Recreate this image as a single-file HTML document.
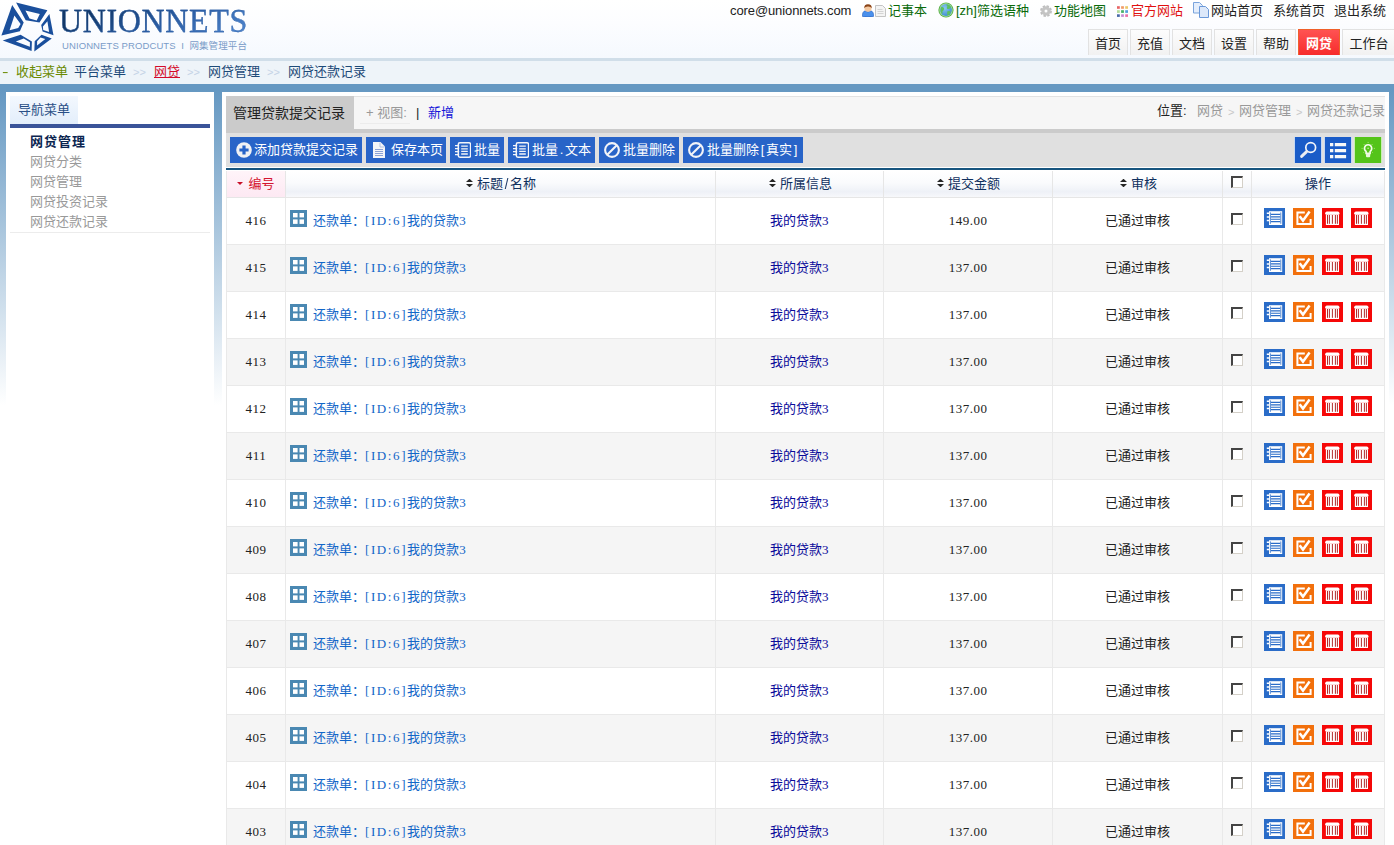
<!DOCTYPE html>
<html lang="zh-CN">
<head>
<meta charset="utf-8">
<title>网集管理平台</title>
<style>
*{box-sizing:border-box;margin:0;padding:0}
html,body{width:1394px;height:845px;overflow:hidden}
body{position:relative;font-family:"Liberation Serif","Noto Sans CJK SC",sans-serif;font-size:12px;color:#222;
 background:linear-gradient(to bottom,#6598c2 0,#6598c2 90px,#ffffff 405px,#ffffff 100%);font-weight:400}
a{text-decoration:none;color:inherit}
.abs{position:absolute}
#hd{left:0;top:0;width:1394px;height:58px;background:linear-gradient(to bottom,#ffffff 0,#fcfdff 40%,#f5f9fe 100%)}
#hdline{left:0;top:58px;width:1394px;height:3px;background:#d0dee9}
#bc{left:0;top:61px;width:1394px;height:23px;background:#eef4f9}
#logo-t{left:59px;top:1.6px;letter-spacing:0.65px;transform:scaleY(1.05);transform-origin:0 0;font-family:"Liberation Serif",serif;font-size:32px;line-height:36px;color:#1c4c86;font-weight:400;white-space:nowrap;background:linear-gradient(155deg,#123868 20%,#2a5ca2 55%,#4a80c8 88%);-webkit-text-stroke:0.25px #2a5ca2;-webkit-background-clip:text;background-clip:text;-webkit-text-fill-color:transparent}
#logo-s{left:62px;top:40px;letter-spacing:0.1px;font-family:"Liberation Sans","Noto Sans CJK SC",sans-serif;font-size:9.5px;line-height:12px;color:#7a9cc8;white-space:nowrap;font-weight:400}
.top{top:3px;height:16px;line-height:16px;font-size:13px;white-space:nowrap;font-family:"Liberation Sans","Noto Sans CJK SC",sans-serif}
.green{color:#0a6a0a}.red{color:#e01010}.dk{color:#222}
.tab{top:29px;height:26px;line-height:27px;text-align:center;font-size:13px;color:#222;border:1px solid #e2e2e2;border-bottom:none;background:linear-gradient(to bottom,#fdfdfd,#f1f1f1);font-family:"Liberation Sans","Noto Sans CJK SC",sans-serif}
.tab.on{background:linear-gradient(to bottom,#ff5252,#f72c2c);border:1px solid #f0602a;border-bottom:none;color:#fff;font-weight:700}
.bct{top:64px;height:16px;line-height:16px;font-size:13px;white-space:nowrap;font-family:"Liberation Sans","Noto Sans CJK SC",sans-serif;color:#1d4a78}
.pos{top:105px;height:16px;line-height:16px;font-size:13px;white-space:nowrap;font-family:"Liberation Sans","Noto Sans CJK SC",sans-serif}
.sep{color:#c5d3e6;font-size:11px;letter-spacing:0}
#side{left:6px;top:92px;width:208px;height:760px;background:#fff}
#main{left:222px;top:92px;width:1167px;height:760px;background:#fff}
#navtab{left:10px;top:96px;width:68px;height:28px;line-height:28px;text-align:center;font-size:13px;color:#2a4f86;background:linear-gradient(to bottom,#f3f8fe,#e3eefb);font-family:"Liberation Sans","Noto Sans CJK SC",sans-serif}
#navline{left:10px;top:124px;width:200px;height:4px;background:#3a5499}
.nv{left:30px;height:14px;line-height:14px;font-size:13px;color:#999;white-space:nowrap;font-family:"Liberation Sans","Noto Sans CJK SC",sans-serif}
.nv.b{color:#0b2550;font-weight:700}
#navend{left:10px;top:232px;width:200px;height:1px;background:#ececec}
#tabrow{left:226px;top:96px;width:1159px;height:33px;background:#f6f6f6;border-top:1px solid #e2e2e2}
#tabg{left:226px;top:96px;width:128px;height:37px;background:#cbcbcb}
#tabgt{left:233px;top:104px;font-size:14px;line-height:18px;color:#222;white-space:nowrap;font-family:"Liberation Sans","Noto Sans CJK SC",sans-serif}
#strip{left:226px;top:129px;width:1159px;height:4px;background:#cbcbcb}
#tool{left:226px;top:133px;width:1159px;height:34px;background:#e0e0e0}
#tline{left:226px;top:168px;width:1159px;height:2px;background:#17557f}
.btn{top:137px;height:26px;line-height:26px;background:#2864c8;color:#fff;font-size:13px;white-space:nowrap;font-family:"Liberation Sans","Noto Sans CJK SC",sans-serif;font-weight:400}
.btn svg{position:absolute;left:5px;top:5px;width:16px;height:16px}
.btn span{position:absolute;left:24px;top:0}
.ib{top:137px;width:26px;height:26px;background:#1a5cc8;box-shadow:-1px 0 0 #c4d8f4,1px 0 0 #c4d8f4}
.ib svg{position:absolute;left:0;top:0;width:26px;height:26px}
table{position:absolute;left:226px;top:171px;width:1159px;border-collapse:separate;border-spacing:0;table-layout:fixed;font-size:13px}
th{height:27px;font-weight:400;color:#10305e;background:linear-gradient(to bottom,#ffffff 0,#fafbfd 45%,#eef1f7 80%,#f7f8fb 100%);border-right:1px solid #e6e6e6;border-bottom:1px solid #e6e6e6;text-align:center;font-size:13px;font-family:"Liberation Serif","Noto Sans CJK SC",sans-serif;vertical-align:middle;line-height:14px}
th.first{background:linear-gradient(to bottom,#fff4f9 0,#fde9f3 100%);color:#d4142f}
td{height:47px;border-right:1px solid #e9e9e9;border-bottom:1px solid #e9e9e9;text-align:center;vertical-align:middle;color:#222;white-space:nowrap;line-height:14px}
tr.even td{background:#f5f5f5}
tr.odd td{background:#fff}
td.c2{text-align:left;padding-left:4px}
td.c7{padding:0 0 6px 0;line-height:0;font-size:0}
.w7{display:inline-block;width:7px;text-align:center}
th .w7{font-family:"Liberation Sans",sans-serif;font-size:13px;line-height:14px;transform:scaleY(1.15)}
td.c1,th.first{border-left:1px solid #e9e9e9}
.gi{width:17px;height:17px;vertical-align:top;margin-top:-4px;margin-right:6px;display:inline-block}
a.t{color:#1266c8}
a.l{color:#0a0a9a}
.cb{display:inline-block;width:12px;height:12px;border-style:solid;border-width:2px 1px 1px 2px;border-color:#444 #d4d0c8 #d4d0c8 #444;background:#fff;vertical-align:middle;margin-top:-6px}
.ai{width:21px;height:20px;display:inline-block;vertical-align:top;margin:0 4px}
.h{font-family:"Liberation Serif",serif;font-size:13px;letter-spacing:0.5px}
.hb{font-family:"Liberation Serif",serif;font-size:13px;letter-spacing:1.6px}
.sort{display:inline-block;width:7px;height:8px;margin-right:4px;vertical-align:1px}
</style>
</head>
<body>
<svg width="0" height="0" style="position:absolute">
<defs>
<g id="i-list"><rect width="21" height="20" fill="#2a6cc8"/><rect x="5" y="3.2" width="13.2" height="13.8" fill="#fff"/><path d="M7 6.4h9.2M7 8.8h9.2M7 11.2h9.2M7 13.6h9.2" stroke="#2a6cc8" stroke-width="1.15"/><path d="M6.4 4.4v11.4M16.8 4.4v11.4" stroke="#2a6cc8" stroke-width="0.8"/><path d="M2.8 5.3h2.4M2.8 8.9h2.4M2.8 12.5h2.4" stroke="#fff" stroke-width="1.5"/></g>
<g id="i-check"><rect width="21" height="20" fill="#f2700c"/><path d="M11.8 4.5H4.4v11.6h13.2V11" fill="none" stroke="#fff" stroke-width="2"/><path d="M6.6 8.2l3.4 4.4 6.6-9" fill="none" stroke="#fff" stroke-width="2.5"/></g>
<g id="i-trash"><rect width="21" height="20" fill="#f60808"/><path d="M3 6.3Q3 3.4 5 3.4h10.6q2 0 2 2.9z" fill="#fff"/><rect x="3.9" y="6.2" width="13.1" height="10.8" fill="#fff"/><path d="M5.5 7v8.8M7.4 7v8.8M10.4 7v8.8M13.4 7v8.8M15.4 7v8.8" stroke="#a81414" stroke-width="0.9"/></g>
<g id="i-trash2"><rect width="21" height="20" fill="#f40808"/><path d="M3 6.3Q3 3.4 5 3.4h10.6q2 0 2 2.9z" fill="#fff"/><rect x="3.9" y="6.2" width="13.1" height="10.8" fill="#fff"/><path d="M5.5 7v8.8M7.4 7v8.8M10.4 7v8.8M13.4 7v8.8M15.4 7v8.8" stroke="#a81414" stroke-width="0.9"/></g>
<g id="i-sort"><path d="M0 3L3.5 -0.3 7 3zM0 5L3.5 8.3 7 5z" fill="#262626"/></g>
</defs>
</svg>

<div id="hd" class="abs"></div>
<div id="hdline" class="abs"></div>
<div id="bc" class="abs"></div>

<!--LOGO-->
<div id="logo-t" class="abs">UNIONNETS</div>
<div id="logo-s" class="abs">UNIONNETS PRODCUTS&nbsp; I &nbsp;<span style="font-size:9.5px">网集管理平台</span></div>

<svg class="abs" style="left:0;top:0" width="58" height="56" viewBox="0 0 58 56">
<g fill="#1a4f9c" fill-rule="evenodd">
<path d="M12.2 4.9L23.7 22.6 19.9 31.2 1.4 35.6zM14.4 15.4L20.6 24 18.2 28.1 9.6 30.2z"/>
<path d="M16.1 2.4L47.4 10.3 39.5 22.6 25.7 20.2zM25.4 10.6L39.8 14.1 36.7 20.6 29.5 18.5z"/>
<path d="M49.4 14.1L53.5 35.3 42.6 31.6 41.2 25.1zM47.4 21.3L49.1 31.9 43.2 29.9 42.9 26.4z"/>
<path d="M41.5 34.7L51.8 38.4 34.3 51.5 34.7 41.2zM40.5 37.4L45.3 39.1 37.1 45.6 37.1 41.2z"/>
<path d="M20.6 34.7L31.9 41.5 31.6 51.1 2.7 40.5zM23.7 38.4L29.9 42.2 29.9 46.7 15.8 41.5z"/>
</g>
</svg>
<div class="abs top dk" style="left:730px;letter-spacing:-0.1px">core@unionnets.com</div>
<svg class="abs" style="left:862px;top:4px" width="12" height="13" viewBox="0 0 12 13"><path d="M0.4 12.4Q0.2 7.2 3.4 6.8L6 8 8.6 6.8Q11.8 7.2 11.6 12.4Q6 13.4 0.4 12.4z" fill="#4a90ec" stroke="#2a62c0" stroke-width="0.6"/><ellipse cx="6" cy="4.4" rx="3.5" ry="3.3" fill="#f4c8a0"/><path d="M2.3 4.2Q2 0.3 6 0.3Q10 0.3 9.7 4.2Q8.6 2.4 6 2.6Q3.4 2.4 2.3 4.2z" fill="#8a4418"/></svg>
<svg class="abs" style="left:875px;top:5px" width="11" height="12" viewBox="0 0 11 12"><path d="M0.5 0.5h7l3 3v8h-10z" fill="#f4f4f4" stroke="#c4c4c4"/><path d="M2.5 4.5h5M2.5 6.5h6M2.5 8.5h6" stroke="#d4d4d4"/></svg>
<div class="abs top green" style="left:888px">记事本</div>
<svg class="abs" style="left:938px;top:2px" width="16" height="16" viewBox="0 0 16 16"><defs><radialGradient id="gg" cx="0.4" cy="0.35" r="0.7"><stop offset="0" stop-color="#8cc8f0"/><stop offset="1" stop-color="#3c8cd0"/></radialGradient></defs><circle cx="8" cy="8" r="7.6" fill="#58b048"/><circle cx="8" cy="8" r="6.7" fill="#a8e098"/><circle cx="8" cy="8" r="5.9" fill="url(#gg)"/><path d="M8.6 2.3Q11.6 2.2 13.2 5Q12 7.6 9.4 7Q8.2 6 9.4 4.6Q8.2 3.6 8.6 2.3zM3 5.2Q5 4.6 6.2 6.4Q6 8.6 4.4 9.4Q5 11.6 3.8 11.8Q2 9.6 3 5.2zM9.2 9.4Q11.4 8.6 12.8 9.8Q12 12.6 9.8 13.4Q8.8 11.4 9.2 9.4z" fill="#5cc060"/></svg>
<div class="abs top green" style="left:956px">[zh]筛选语种</div>
<svg class="abs" style="left:1040px;top:5px" width="12" height="12" viewBox="0 0 12 12"><circle cx="6" cy="6" r="4.6" fill="none" stroke="#bdbdbd" stroke-width="2.6" stroke-dasharray="2.2 1.41"/><circle cx="6" cy="6" r="3.1" fill="none" stroke="#c4c4c4" stroke-width="3.2"/></svg>
<div class="abs top green" style="left:1054px">功能地图</div>
<svg class="abs" style="left:1117px;top:6px" width="11" height="11" viewBox="0 0 11 11"><rect x="0" y="0.2" width="2.8" height="2.6" fill="#e86464"/><rect x="4.1" y="0.2" width="2.8" height="2.6" fill="#f09c68"/><rect x="8.2" y="0.2" width="2.8" height="2.6" fill="#ecc868"/><rect x="0" y="4.2" width="2.8" height="2.7" fill="#b4dc9c"/><rect x="4.1" y="4.2" width="2.8" height="2.7" fill="#48b068"/><rect x="8.2" y="4.2" width="2.8" height="2.7" fill="#58a0dc"/><rect x="0" y="8.3" width="2.8" height="2.6" fill="#4868a8"/><rect x="4.1" y="8.3" width="2.8" height="2.6" fill="#c88cd4"/><rect x="8.2" y="8.3" width="2.8" height="2.6" fill="#ec70a8"/></svg>
<div class="abs top red" style="left:1131px">官方网站</div>
<svg class="abs" style="left:1193px;top:2px" width="17" height="16" viewBox="0 0 17 16"><path d="M0.5 0.5h6l3 3v7.5h-9z" fill="#e4eefc" stroke="#7aa4dc"/><path d="M6.5 4.5h6l3 3v8h-9z" fill="#dce8fa" stroke="#6a98d8"/></svg>
<div class="abs top dk" style="left:1211px">网站首页</div>
<div class="abs top dk" style="left:1273px">系统首页</div>
<div class="abs top dk" style="left:1334px">退出系统</div>

<div class="abs tab" style="left:1088px;width:40px">首页</div>
<div class="abs tab" style="left:1130px;width:40px">充值</div>
<div class="abs tab" style="left:1172px;width:40px">文档</div>
<div class="abs tab" style="left:1214px;width:40px">设置</div>
<div class="abs tab" style="left:1256px;width:40px">帮助</div>
<div class="abs tab on" style="left:1298px;width:42px">网贷</div>
<div class="abs tab" style="left:1342px;width:54px">工作台</div>

<div class="abs bct" style="left:2px;color:#6a8a00;transform:scaleX(1.5);transform-origin:0 50%">-</div>
<div class="abs bct" style="left:16px;color:#6a8a00">收起菜单</div>
<div class="abs bct" style="left:74px">平台菜单</div>
<div class="abs bct sep" style="left:133px">&gt;&gt;</div>
<div class="abs bct" style="left:154px;color:#d40a2a;text-decoration:underline">网贷</div>
<div class="abs bct sep" style="left:187px">&gt;&gt;</div>
<div class="abs bct" style="left:208px">网贷管理</div>
<div class="abs bct sep" style="left:267px">&gt;&gt;</div>
<div class="abs bct" style="left:288px">网贷还款记录</div>

<div id="side" class="abs"></div>
<div id="navtab" class="abs">导航菜单</div>
<div id="navline" class="abs"></div>
<div class="abs nv b" style="top:135px;letter-spacing:1px">网贷管理</div>
<div class="abs nv" style="top:155px">网贷分类</div>
<div class="abs nv" style="top:175px">网贷管理</div>
<div class="abs nv" style="top:195px">网贷投资记录</div>
<div class="abs nv" style="top:215px">网贷还款记录</div>
<div id="navend" class="abs"></div>

<div id="main" class="abs"></div>
<div id="tabrow" class="abs"></div>
<div id="strip" class="abs"></div>
<div id="tabg" class="abs"></div>
<div id="tabgt" class="abs">管理贷款提交记录</div>
<div class="abs pos" style="left:366px;color:#999">+ 视图:</div>
<div class="abs pos" style="left:416px;color:#222">|</div>
<div class="abs pos" style="left:428px;color:#1414d8">新增</div>
<div class="abs pos" style="top:102.5px;left:1157px;color:#222">位置:</div>
<div class="abs pos" style="top:102.5px;left:1197px;color:#999">网贷</div>
<div class="abs pos" style="top:104px;left:1228px;color:#c8c8c8;font-size:11px">&gt;</div>
<div class="abs pos" style="top:102.5px;left:1239px;color:#999">网贷管理</div>
<div class="abs pos" style="top:104px;left:1296px;color:#c8c8c8;font-size:11px">&gt;</div>
<div class="abs pos" style="top:102.5px;left:1307px;color:#999">网贷还款记录</div>
<div class="abs" style="left:360px;top:123px;width:50px;height:1px;background:#ececec"></div>
<div id="tool" class="abs"></div>
<div id="tline" class="abs"></div>
<div class="abs btn" style="left:230px;width:132px"><svg viewBox="0 0 16 16" style="left:5.5px;top:5.4px"><circle cx="8" cy="8" r="7.8" fill="#f0f1f4"/><path d="M8 3.4v9.2M3.4 8h9.2" stroke="#2864c8" stroke-width="3.2"/></svg><span>添加贷款提交记录</span></div>
<div class="abs btn" style="left:366px;width:80px"><svg viewBox="0 0 12 16" style="left:7px;top:5px;width:12px;height:16px"><path d="M0 0h7.5L12 4.5V16H0z" fill="#f4f5f8"/><path d="M7 0.6v4.4h4.4" fill="none" stroke="#b4c4e4" stroke-width="1"/><path d="M2 7.5h8M2 9.5h8M2 11.5h8M2 13.5h8" stroke="#8098d0" stroke-width="0.9"/></svg><span style="left:25px">保存本页</span></div>
<div class="abs btn" style="left:450px;width:54px"><svg viewBox="0 0 16.4 16" style="left:4.8px;top:5px;width:16.4px;height:16px"><rect x="3.3" y="0.8" width="12.3" height="14.4" rx="1.6" fill="none" stroke="#f4f5f8" stroke-width="1.5"/><path d="M6.2 4.2h6.6M6.2 6.8h6.6M6.2 9.4h6.6M6.2 12h6.6" stroke="#f4f5f8" stroke-width="1.3"/><path d="M0.4 3.6h3.2M0.4 6.6h3.2M0.4 9.6h3.2M0.4 12.6h3.2" stroke="#f4f5f8" stroke-width="1.4" stroke-linecap="round"/></svg><span>批量</span></div>
<div class="abs btn" style="left:508px;width:87px"><svg viewBox="0 0 16.4 16" style="left:4.8px;top:5px;width:16.4px;height:16px"><rect x="3.3" y="0.8" width="12.3" height="14.4" rx="1.6" fill="none" stroke="#f4f5f8" stroke-width="1.5"/><path d="M6.2 4.2h6.6M6.2 6.8h6.6M6.2 9.4h6.6M6.2 12h6.6" stroke="#f4f5f8" stroke-width="1.3"/><path d="M0.4 3.6h3.2M0.4 6.6h3.2M0.4 9.6h3.2M0.4 12.6h3.2" stroke="#f4f5f8" stroke-width="1.4" stroke-linecap="round"/></svg><span>批量<b class="w7" style="font-weight:400">.</b>文本</span></div>
<div class="abs btn" style="left:599px;width:80px"><svg viewBox="0 0 16 16" style="left:4.8px;top:5px"><circle cx="8" cy="8" r="6.9" fill="none" stroke="#f2f4f8" stroke-width="2.1"/><path d="M3.2 12.8L12.8 3.2" stroke="#f2f4f8" stroke-width="2.1"/></svg><span>批量删除</span></div>
<div class="abs btn" style="left:683px;width:120px"><svg viewBox="0 0 16 16" style="left:4.8px;top:5px"><circle cx="8" cy="8" r="6.9" fill="none" stroke="#f2f4f8" stroke-width="2.1"/><path d="M3.2 12.8L12.8 3.2" stroke="#f2f4f8" stroke-width="2.1"/></svg><span>批量删除<b class="w7" style="font-weight:400">[</b>真实<b class="w7" style="font-weight:400">]</b></span></div>
<div class="abs ib" style="left:1295px"><svg viewBox="0 0 26 26"><circle cx="15.7" cy="10.5" r="4.9" fill="none" stroke="#f4f6fa" stroke-width="1.7"/><path d="M11.6 14.6L6.6 19.4" stroke="#eceef2" stroke-width="2.9" stroke-linecap="round"/></svg></div>
<div class="abs ib" style="left:1325px"><svg viewBox="0 0 26 26"><path d="M5 7.6h3.3M5 13.6h3.3M5 19.6h3.3M9.8 7.6h11.3M9.8 13.6h11.3M9.8 19.6h11.3" stroke="#f8f8f8" stroke-width="3.1"/></svg></div>
<div class="abs ib" style="left:1355px;background:#54c41a;box-shadow:-1px 0 0 #c8f0b0,1px 0 0 #c8f0b0"><svg viewBox="0 0 26 26"><path d="M13.1 7.8a3.6 3.6 0 0 0-2 6.6v2h4v-2a3.6 3.6 0 0 0-2-6.6z" fill="none" stroke="#f4fcec" stroke-width="1.6"/><rect x="11" y="16.6" width="4.2" height="3.6" rx="1" fill="#e8f8dc"/><circle cx="13.1" cy="11.2" r="0.8" fill="#d0f0b8"/><path d="M13.1 4.9v1M6.6 11.4h1M18.8 11.4h1M8.6 7l.8.8M17.6 7l-.8.8M8.6 15.6l.8-.8M17.6 15.6l-.8-.8" stroke="#b8ec90" stroke-width="0.9"/></svg></div>
<table>
<colgroup><col style="width:60px"><col style="width:430px"><col style="width:168px"><col style="width:169px"><col style="width:170px"><col style="width:29px"><col style="width:133px"></colgroup>
<tr><th class="first"><svg width="6" height="3" viewBox="0 0 6 3" style="vertical-align:3px;margin-right:5px"><path d="M0 0h6L3 3z" fill="#c81028"/></svg>编号</th><th style="padding-left:1px"><svg class="sort" viewBox="0 0 7 8"><use href="#i-sort"/></svg>标题<span class="w7">/</span>名称</th><th style="padding-left:2px"><svg class="sort" viewBox="0 0 7 8"><use href="#i-sort"/></svg>所属信息</th><th style="padding-left:1px"><svg class="sort" viewBox="0 0 7 8"><use href="#i-sort"/></svg>提交金额</th><th style="padding-left:2px"><svg class="sort" viewBox="0 0 7 8"><use href="#i-sort"/></svg>审核</th><th><i class="cb"></i></th><th>操作</th></tr>
<tr class="odd"><td class="c1 h">416</td><td class="c2"><svg class="gi" viewBox="0 0 17 17"><rect width="17" height="17" fill="#4a88b2"/><rect x="3" y="3" width="4.6" height="4.4" fill="#fff"/><rect x="9.5" y="3" width="4.5" height="4.4" fill="#fff"/><rect x="3" y="9.4" width="4.6" height="4.5" fill="#fff"/><rect x="9.5" y="9.4" width="4.5" height="4.5" fill="#fff"/></svg><a class="t">还款单：<span class="hb">[ID:6]</span>我的贷款<span class="h">3</span></a></td><td class="c3"><a class="l">我的贷款<span class="h">3</span></a></td><td class="c4 h">149.00</td><td class="c5">已通过审核</td><td class="c6"><i class="cb"></i></td><td class="c7"><svg class="ai" viewBox="0 0 21 20"><use href="#i-list"/></svg><svg class="ai" viewBox="0 0 21 20"><use href="#i-check"/></svg><svg class="ai" viewBox="0 0 21 20"><use href="#i-trash"/></svg><svg class="ai" viewBox="0 0 21 20"><use href="#i-trash2"/></svg></td></tr>
<tr class="even"><td class="c1 h">415</td><td class="c2"><svg class="gi" viewBox="0 0 17 17"><rect width="17" height="17" fill="#4a88b2"/><rect x="3" y="3" width="4.6" height="4.4" fill="#fff"/><rect x="9.5" y="3" width="4.5" height="4.4" fill="#fff"/><rect x="3" y="9.4" width="4.6" height="4.5" fill="#fff"/><rect x="9.5" y="9.4" width="4.5" height="4.5" fill="#fff"/></svg><a class="t">还款单：<span class="hb">[ID:6]</span>我的贷款<span class="h">3</span></a></td><td class="c3"><a class="l">我的贷款<span class="h">3</span></a></td><td class="c4 h">137.00</td><td class="c5">已通过审核</td><td class="c6"><i class="cb"></i></td><td class="c7"><svg class="ai" viewBox="0 0 21 20"><use href="#i-list"/></svg><svg class="ai" viewBox="0 0 21 20"><use href="#i-check"/></svg><svg class="ai" viewBox="0 0 21 20"><use href="#i-trash"/></svg><svg class="ai" viewBox="0 0 21 20"><use href="#i-trash2"/></svg></td></tr>
<tr class="odd"><td class="c1 h">414</td><td class="c2"><svg class="gi" viewBox="0 0 17 17"><rect width="17" height="17" fill="#4a88b2"/><rect x="3" y="3" width="4.6" height="4.4" fill="#fff"/><rect x="9.5" y="3" width="4.5" height="4.4" fill="#fff"/><rect x="3" y="9.4" width="4.6" height="4.5" fill="#fff"/><rect x="9.5" y="9.4" width="4.5" height="4.5" fill="#fff"/></svg><a class="t">还款单：<span class="hb">[ID:6]</span>我的贷款<span class="h">3</span></a></td><td class="c3"><a class="l">我的贷款<span class="h">3</span></a></td><td class="c4 h">137.00</td><td class="c5">已通过审核</td><td class="c6"><i class="cb"></i></td><td class="c7"><svg class="ai" viewBox="0 0 21 20"><use href="#i-list"/></svg><svg class="ai" viewBox="0 0 21 20"><use href="#i-check"/></svg><svg class="ai" viewBox="0 0 21 20"><use href="#i-trash"/></svg><svg class="ai" viewBox="0 0 21 20"><use href="#i-trash2"/></svg></td></tr>
<tr class="even"><td class="c1 h">413</td><td class="c2"><svg class="gi" viewBox="0 0 17 17"><rect width="17" height="17" fill="#4a88b2"/><rect x="3" y="3" width="4.6" height="4.4" fill="#fff"/><rect x="9.5" y="3" width="4.5" height="4.4" fill="#fff"/><rect x="3" y="9.4" width="4.6" height="4.5" fill="#fff"/><rect x="9.5" y="9.4" width="4.5" height="4.5" fill="#fff"/></svg><a class="t">还款单：<span class="hb">[ID:6]</span>我的贷款<span class="h">3</span></a></td><td class="c3"><a class="l">我的贷款<span class="h">3</span></a></td><td class="c4 h">137.00</td><td class="c5">已通过审核</td><td class="c6"><i class="cb"></i></td><td class="c7"><svg class="ai" viewBox="0 0 21 20"><use href="#i-list"/></svg><svg class="ai" viewBox="0 0 21 20"><use href="#i-check"/></svg><svg class="ai" viewBox="0 0 21 20"><use href="#i-trash"/></svg><svg class="ai" viewBox="0 0 21 20"><use href="#i-trash2"/></svg></td></tr>
<tr class="odd"><td class="c1 h">412</td><td class="c2"><svg class="gi" viewBox="0 0 17 17"><rect width="17" height="17" fill="#4a88b2"/><rect x="3" y="3" width="4.6" height="4.4" fill="#fff"/><rect x="9.5" y="3" width="4.5" height="4.4" fill="#fff"/><rect x="3" y="9.4" width="4.6" height="4.5" fill="#fff"/><rect x="9.5" y="9.4" width="4.5" height="4.5" fill="#fff"/></svg><a class="t">还款单：<span class="hb">[ID:6]</span>我的贷款<span class="h">3</span></a></td><td class="c3"><a class="l">我的贷款<span class="h">3</span></a></td><td class="c4 h">137.00</td><td class="c5">已通过审核</td><td class="c6"><i class="cb"></i></td><td class="c7"><svg class="ai" viewBox="0 0 21 20"><use href="#i-list"/></svg><svg class="ai" viewBox="0 0 21 20"><use href="#i-check"/></svg><svg class="ai" viewBox="0 0 21 20"><use href="#i-trash"/></svg><svg class="ai" viewBox="0 0 21 20"><use href="#i-trash2"/></svg></td></tr>
<tr class="even"><td class="c1 h">411</td><td class="c2"><svg class="gi" viewBox="0 0 17 17"><rect width="17" height="17" fill="#4a88b2"/><rect x="3" y="3" width="4.6" height="4.4" fill="#fff"/><rect x="9.5" y="3" width="4.5" height="4.4" fill="#fff"/><rect x="3" y="9.4" width="4.6" height="4.5" fill="#fff"/><rect x="9.5" y="9.4" width="4.5" height="4.5" fill="#fff"/></svg><a class="t">还款单：<span class="hb">[ID:6]</span>我的贷款<span class="h">3</span></a></td><td class="c3"><a class="l">我的贷款<span class="h">3</span></a></td><td class="c4 h">137.00</td><td class="c5">已通过审核</td><td class="c6"><i class="cb"></i></td><td class="c7"><svg class="ai" viewBox="0 0 21 20"><use href="#i-list"/></svg><svg class="ai" viewBox="0 0 21 20"><use href="#i-check"/></svg><svg class="ai" viewBox="0 0 21 20"><use href="#i-trash"/></svg><svg class="ai" viewBox="0 0 21 20"><use href="#i-trash2"/></svg></td></tr>
<tr class="odd"><td class="c1 h">410</td><td class="c2"><svg class="gi" viewBox="0 0 17 17"><rect width="17" height="17" fill="#4a88b2"/><rect x="3" y="3" width="4.6" height="4.4" fill="#fff"/><rect x="9.5" y="3" width="4.5" height="4.4" fill="#fff"/><rect x="3" y="9.4" width="4.6" height="4.5" fill="#fff"/><rect x="9.5" y="9.4" width="4.5" height="4.5" fill="#fff"/></svg><a class="t">还款单：<span class="hb">[ID:6]</span>我的贷款<span class="h">3</span></a></td><td class="c3"><a class="l">我的贷款<span class="h">3</span></a></td><td class="c4 h">137.00</td><td class="c5">已通过审核</td><td class="c6"><i class="cb"></i></td><td class="c7"><svg class="ai" viewBox="0 0 21 20"><use href="#i-list"/></svg><svg class="ai" viewBox="0 0 21 20"><use href="#i-check"/></svg><svg class="ai" viewBox="0 0 21 20"><use href="#i-trash"/></svg><svg class="ai" viewBox="0 0 21 20"><use href="#i-trash2"/></svg></td></tr>
<tr class="even"><td class="c1 h">409</td><td class="c2"><svg class="gi" viewBox="0 0 17 17"><rect width="17" height="17" fill="#4a88b2"/><rect x="3" y="3" width="4.6" height="4.4" fill="#fff"/><rect x="9.5" y="3" width="4.5" height="4.4" fill="#fff"/><rect x="3" y="9.4" width="4.6" height="4.5" fill="#fff"/><rect x="9.5" y="9.4" width="4.5" height="4.5" fill="#fff"/></svg><a class="t">还款单：<span class="hb">[ID:6]</span>我的贷款<span class="h">3</span></a></td><td class="c3"><a class="l">我的贷款<span class="h">3</span></a></td><td class="c4 h">137.00</td><td class="c5">已通过审核</td><td class="c6"><i class="cb"></i></td><td class="c7"><svg class="ai" viewBox="0 0 21 20"><use href="#i-list"/></svg><svg class="ai" viewBox="0 0 21 20"><use href="#i-check"/></svg><svg class="ai" viewBox="0 0 21 20"><use href="#i-trash"/></svg><svg class="ai" viewBox="0 0 21 20"><use href="#i-trash2"/></svg></td></tr>
<tr class="odd"><td class="c1 h">408</td><td class="c2"><svg class="gi" viewBox="0 0 17 17"><rect width="17" height="17" fill="#4a88b2"/><rect x="3" y="3" width="4.6" height="4.4" fill="#fff"/><rect x="9.5" y="3" width="4.5" height="4.4" fill="#fff"/><rect x="3" y="9.4" width="4.6" height="4.5" fill="#fff"/><rect x="9.5" y="9.4" width="4.5" height="4.5" fill="#fff"/></svg><a class="t">还款单：<span class="hb">[ID:6]</span>我的贷款<span class="h">3</span></a></td><td class="c3"><a class="l">我的贷款<span class="h">3</span></a></td><td class="c4 h">137.00</td><td class="c5">已通过审核</td><td class="c6"><i class="cb"></i></td><td class="c7"><svg class="ai" viewBox="0 0 21 20"><use href="#i-list"/></svg><svg class="ai" viewBox="0 0 21 20"><use href="#i-check"/></svg><svg class="ai" viewBox="0 0 21 20"><use href="#i-trash"/></svg><svg class="ai" viewBox="0 0 21 20"><use href="#i-trash2"/></svg></td></tr>
<tr class="even"><td class="c1 h">407</td><td class="c2"><svg class="gi" viewBox="0 0 17 17"><rect width="17" height="17" fill="#4a88b2"/><rect x="3" y="3" width="4.6" height="4.4" fill="#fff"/><rect x="9.5" y="3" width="4.5" height="4.4" fill="#fff"/><rect x="3" y="9.4" width="4.6" height="4.5" fill="#fff"/><rect x="9.5" y="9.4" width="4.5" height="4.5" fill="#fff"/></svg><a class="t">还款单：<span class="hb">[ID:6]</span>我的贷款<span class="h">3</span></a></td><td class="c3"><a class="l">我的贷款<span class="h">3</span></a></td><td class="c4 h">137.00</td><td class="c5">已通过审核</td><td class="c6"><i class="cb"></i></td><td class="c7"><svg class="ai" viewBox="0 0 21 20"><use href="#i-list"/></svg><svg class="ai" viewBox="0 0 21 20"><use href="#i-check"/></svg><svg class="ai" viewBox="0 0 21 20"><use href="#i-trash"/></svg><svg class="ai" viewBox="0 0 21 20"><use href="#i-trash2"/></svg></td></tr>
<tr class="odd"><td class="c1 h">406</td><td class="c2"><svg class="gi" viewBox="0 0 17 17"><rect width="17" height="17" fill="#4a88b2"/><rect x="3" y="3" width="4.6" height="4.4" fill="#fff"/><rect x="9.5" y="3" width="4.5" height="4.4" fill="#fff"/><rect x="3" y="9.4" width="4.6" height="4.5" fill="#fff"/><rect x="9.5" y="9.4" width="4.5" height="4.5" fill="#fff"/></svg><a class="t">还款单：<span class="hb">[ID:6]</span>我的贷款<span class="h">3</span></a></td><td class="c3"><a class="l">我的贷款<span class="h">3</span></a></td><td class="c4 h">137.00</td><td class="c5">已通过审核</td><td class="c6"><i class="cb"></i></td><td class="c7"><svg class="ai" viewBox="0 0 21 20"><use href="#i-list"/></svg><svg class="ai" viewBox="0 0 21 20"><use href="#i-check"/></svg><svg class="ai" viewBox="0 0 21 20"><use href="#i-trash"/></svg><svg class="ai" viewBox="0 0 21 20"><use href="#i-trash2"/></svg></td></tr>
<tr class="even"><td class="c1 h">405</td><td class="c2"><svg class="gi" viewBox="0 0 17 17"><rect width="17" height="17" fill="#4a88b2"/><rect x="3" y="3" width="4.6" height="4.4" fill="#fff"/><rect x="9.5" y="3" width="4.5" height="4.4" fill="#fff"/><rect x="3" y="9.4" width="4.6" height="4.5" fill="#fff"/><rect x="9.5" y="9.4" width="4.5" height="4.5" fill="#fff"/></svg><a class="t">还款单：<span class="hb">[ID:6]</span>我的贷款<span class="h">3</span></a></td><td class="c3"><a class="l">我的贷款<span class="h">3</span></a></td><td class="c4 h">137.00</td><td class="c5">已通过审核</td><td class="c6"><i class="cb"></i></td><td class="c7"><svg class="ai" viewBox="0 0 21 20"><use href="#i-list"/></svg><svg class="ai" viewBox="0 0 21 20"><use href="#i-check"/></svg><svg class="ai" viewBox="0 0 21 20"><use href="#i-trash"/></svg><svg class="ai" viewBox="0 0 21 20"><use href="#i-trash2"/></svg></td></tr>
<tr class="odd"><td class="c1 h">404</td><td class="c2"><svg class="gi" viewBox="0 0 17 17"><rect width="17" height="17" fill="#4a88b2"/><rect x="3" y="3" width="4.6" height="4.4" fill="#fff"/><rect x="9.5" y="3" width="4.5" height="4.4" fill="#fff"/><rect x="3" y="9.4" width="4.6" height="4.5" fill="#fff"/><rect x="9.5" y="9.4" width="4.5" height="4.5" fill="#fff"/></svg><a class="t">还款单：<span class="hb">[ID:6]</span>我的贷款<span class="h">3</span></a></td><td class="c3"><a class="l">我的贷款<span class="h">3</span></a></td><td class="c4 h">137.00</td><td class="c5">已通过审核</td><td class="c6"><i class="cb"></i></td><td class="c7"><svg class="ai" viewBox="0 0 21 20"><use href="#i-list"/></svg><svg class="ai" viewBox="0 0 21 20"><use href="#i-check"/></svg><svg class="ai" viewBox="0 0 21 20"><use href="#i-trash"/></svg><svg class="ai" viewBox="0 0 21 20"><use href="#i-trash2"/></svg></td></tr>
<tr class="even"><td class="c1 h">403</td><td class="c2"><svg class="gi" viewBox="0 0 17 17"><rect width="17" height="17" fill="#4a88b2"/><rect x="3" y="3" width="4.6" height="4.4" fill="#fff"/><rect x="9.5" y="3" width="4.5" height="4.4" fill="#fff"/><rect x="3" y="9.4" width="4.6" height="4.5" fill="#fff"/><rect x="9.5" y="9.4" width="4.5" height="4.5" fill="#fff"/></svg><a class="t">还款单：<span class="hb">[ID:6]</span>我的贷款<span class="h">3</span></a></td><td class="c3"><a class="l">我的贷款<span class="h">3</span></a></td><td class="c4 h">137.00</td><td class="c5">已通过审核</td><td class="c6"><i class="cb"></i></td><td class="c7"><svg class="ai" viewBox="0 0 21 20"><use href="#i-list"/></svg><svg class="ai" viewBox="0 0 21 20"><use href="#i-check"/></svg><svg class="ai" viewBox="0 0 21 20"><use href="#i-trash"/></svg><svg class="ai" viewBox="0 0 21 20"><use href="#i-trash2"/></svg></td></tr>
</table>

</body>
</html>
